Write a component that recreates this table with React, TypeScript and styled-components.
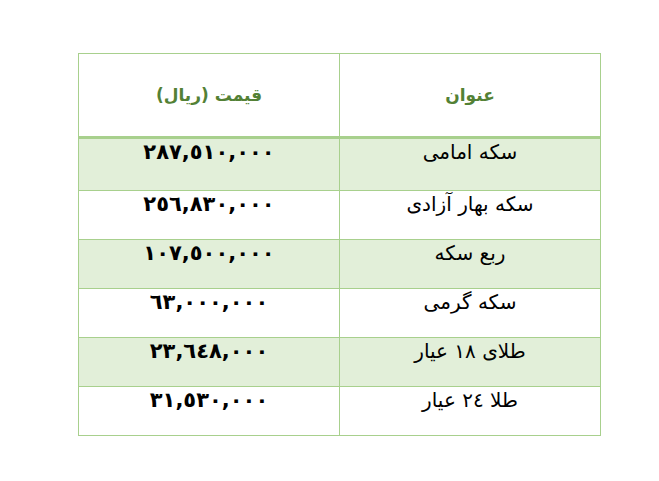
import React from 'react'
import styled, { createGlobalStyle } from 'styled-components'

const GREEN_BORDER = '#a8d08d'
const GREEN_FILL = '#e2efd9'
const GREEN_TEXT = '#538135'

const GlobalStyle = createGlobalStyle`
  html, body {
    margin: 0;
    padding: 0;
    background: #ffffff;
  }
  body {
    font-family: "DejaVu Sans", "Liberation Sans", sans-serif;
  }
`

const Page = styled.div`
  padding: 53px 0 0 78px;
`

const PriceTable = styled.table`
  direction: rtl;
  border-collapse: collapse;
  width: 523px;
  table-layout: fixed;
`

const HeadCell = styled.th`
  height: 82px;
  padding: 0;
  border: 1px solid ${GREEN_BORDER};
  border-bottom: 3px solid ${GREEN_BORDER};
  color: ${GREEN_TEXT};
  font-size: 17px;
  font-weight: bold;
  text-align: center;
  vertical-align: middle;
`

const Row = styled.tr<{ shaded?: boolean }>`
  background: ${props => (props.shaded ? GREEN_FILL : '#ffffff')};
`

const Cell = styled.td<{ tall?: boolean }>`
  height: ${props => (props.tall ? '53px' : '49px')};
  padding: 0;
  border: 1px solid ${GREEN_BORDER};
  text-align: center;
  vertical-align: top;
  color: #000000;
  box-sizing: border-box;
  line-height: 27px;
`

const Title = styled.span`
  font-size: 20px;
`

const Price = styled.span`
  font-size: 21px;
  font-weight: bold;
`

const rows = [
  { title: 'سکه امامی', price: '٢٨٧,٥١٠,٠٠٠' },
  { title: 'سکه بهار آزادی', price: '٢٥٦,٨٣٠,٠٠٠' },
  { title: 'ربع سکه', price: '١٠٧,٥٠٠,٠٠٠' },
  { title: 'سکه گرمی', price: '٦٣,٠٠٠,٠٠٠' },
  { title: 'طلای ١٨ عیار', price: '٢٣,٦٤٨,٠٠٠' },
  { title: 'طلا ٢٤ عیار', price: '٣١,٥٣٠,٠٠٠' },
]

export default function App() {
  return (
    <>
      <GlobalStyle />
      <Page>
        <PriceTable>
          <thead>
            <tr>
              <HeadCell>عنوان</HeadCell>
              <HeadCell>قیمت (ریال)</HeadCell>
            </tr>
          </thead>
          <tbody>
            {rows.map((row, i) => (
              <Row key={row.title} shaded={i % 2 === 0}>
                <Cell tall={i === 0}>
                  <Title>{row.title}</Title>
                </Cell>
                <Cell tall={i === 0}>
                  <Price>{row.price}</Price>
                </Cell>
              </Row>
            ))}
          </tbody>
        </PriceTable>
      </Page>
    </>
  )
}
